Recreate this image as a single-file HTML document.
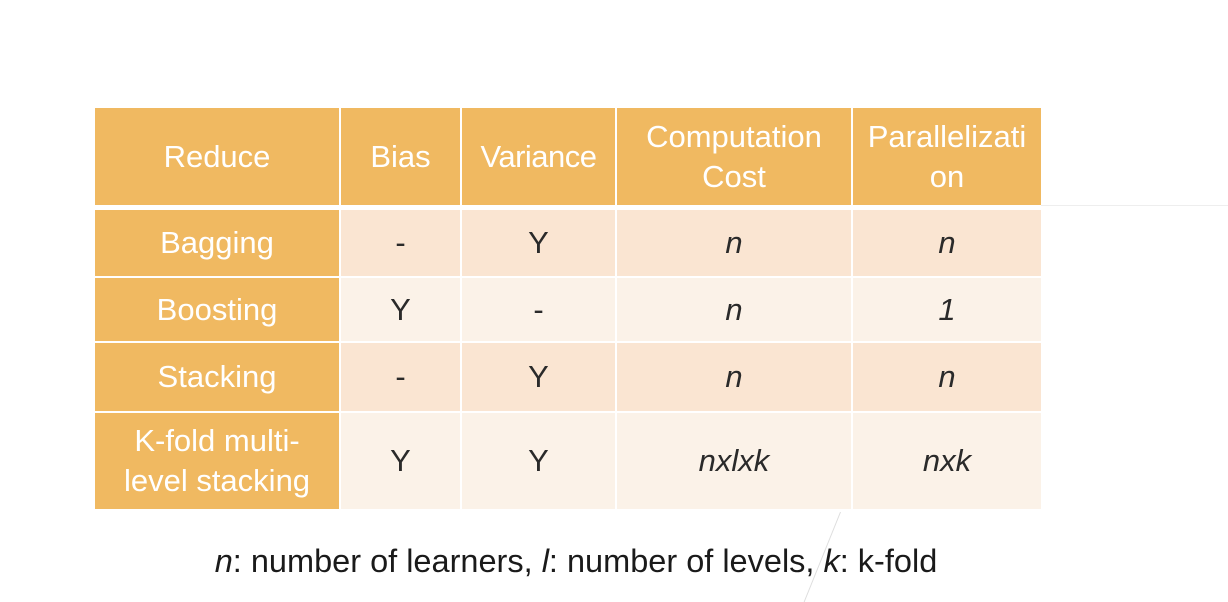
<!DOCTYPE html>
<html><head><style>
body{margin:0;width:1228px;height:596px;background:#fff;position:relative;overflow:hidden;font-family:"Liberation Sans",sans-serif;}
.c{position:absolute;display:flex;align-items:center;justify-content:center;text-align:center;font-size:31px;line-height:40px;color:#2a2a2a;}
.h{background:#F0B961;color:#fff;}
.a{background:#FAE5D2;}
.b{background:#FBF2E8;}
i{font-style:italic;}
</style></head><body>
<div style="position:absolute;left:1041px;top:205px;width:187px;height:1px;background:#eee"></div>
<div style="position:absolute;left:840px;top:512px;width:1px;height:90px;background:#ddd;transform:skewX(-22deg);transform-origin:top"></div>
<!-- header -->
<div class="c h" style="left:95px;top:108px;width:244px;height:97px">Reduce</div>
<div class="c h" style="left:341px;top:108px;width:119px;height:97px">Bias</div>
<div class="c h" style="left:462px;top:108px;width:153px;height:97px;letter-spacing:-0.5px">Variance</div>
<div class="c h" style="left:617px;top:108px;width:234px;height:97px">Computation<br>Cost</div>
<div class="c h" style="left:853px;top:108px;width:188px;height:97px">Parallelizati<br>on</div>
<!-- row1 -->
<div class="c h" style="left:95px;top:210px;width:244px;height:66px">Bagging</div>
<div class="c a" style="left:341px;top:210px;width:119px;height:66px">-</div>
<div class="c a" style="left:462px;top:210px;width:153px;height:66px">Y</div>
<div class="c a" style="left:617px;top:210px;width:234px;height:66px"><i>n</i></div>
<div class="c a" style="left:853px;top:210px;width:188px;height:66px"><i>n</i></div>
<!-- row2 -->
<div class="c h" style="left:95px;top:278px;width:244px;height:63px">Boosting</div>
<div class="c b" style="left:341px;top:278px;width:119px;height:63px">Y</div>
<div class="c b" style="left:462px;top:278px;width:153px;height:63px">-</div>
<div class="c b" style="left:617px;top:278px;width:234px;height:63px"><i>n</i></div>
<div class="c b" style="left:853px;top:278px;width:188px;height:63px"><i>1</i></div>
<!-- row3 -->
<div class="c h" style="left:95px;top:343px;width:244px;height:68px">Stacking</div>
<div class="c a" style="left:341px;top:343px;width:119px;height:68px">-</div>
<div class="c a" style="left:462px;top:343px;width:153px;height:68px">Y</div>
<div class="c a" style="left:617px;top:343px;width:234px;height:68px"><i>n</i></div>
<div class="c a" style="left:853px;top:343px;width:188px;height:68px"><i>n</i></div>
<!-- row4 -->
<div class="c h" style="left:95px;top:413px;width:244px;height:96px">K-fold multi-<br>level stacking</div>
<div class="c b" style="left:341px;top:413px;width:119px;height:96px">Y</div>
<div class="c b" style="left:462px;top:413px;width:153px;height:96px">Y</div>
<div class="c b" style="left:617px;top:413px;width:234px;height:96px"><i>nxlxk</i></div>
<div class="c b" style="left:853px;top:413px;width:188px;height:96px"><i>nxk</i></div>
<div style="position:absolute;left:0;width:1152px;top:541px;text-align:center;font-size:32.5px;color:#1a1a1a;line-height:40px"><i>n</i>: number of learners, <i>l</i>: number of levels, <i>k</i>: k-fold</div>
</body></html>
